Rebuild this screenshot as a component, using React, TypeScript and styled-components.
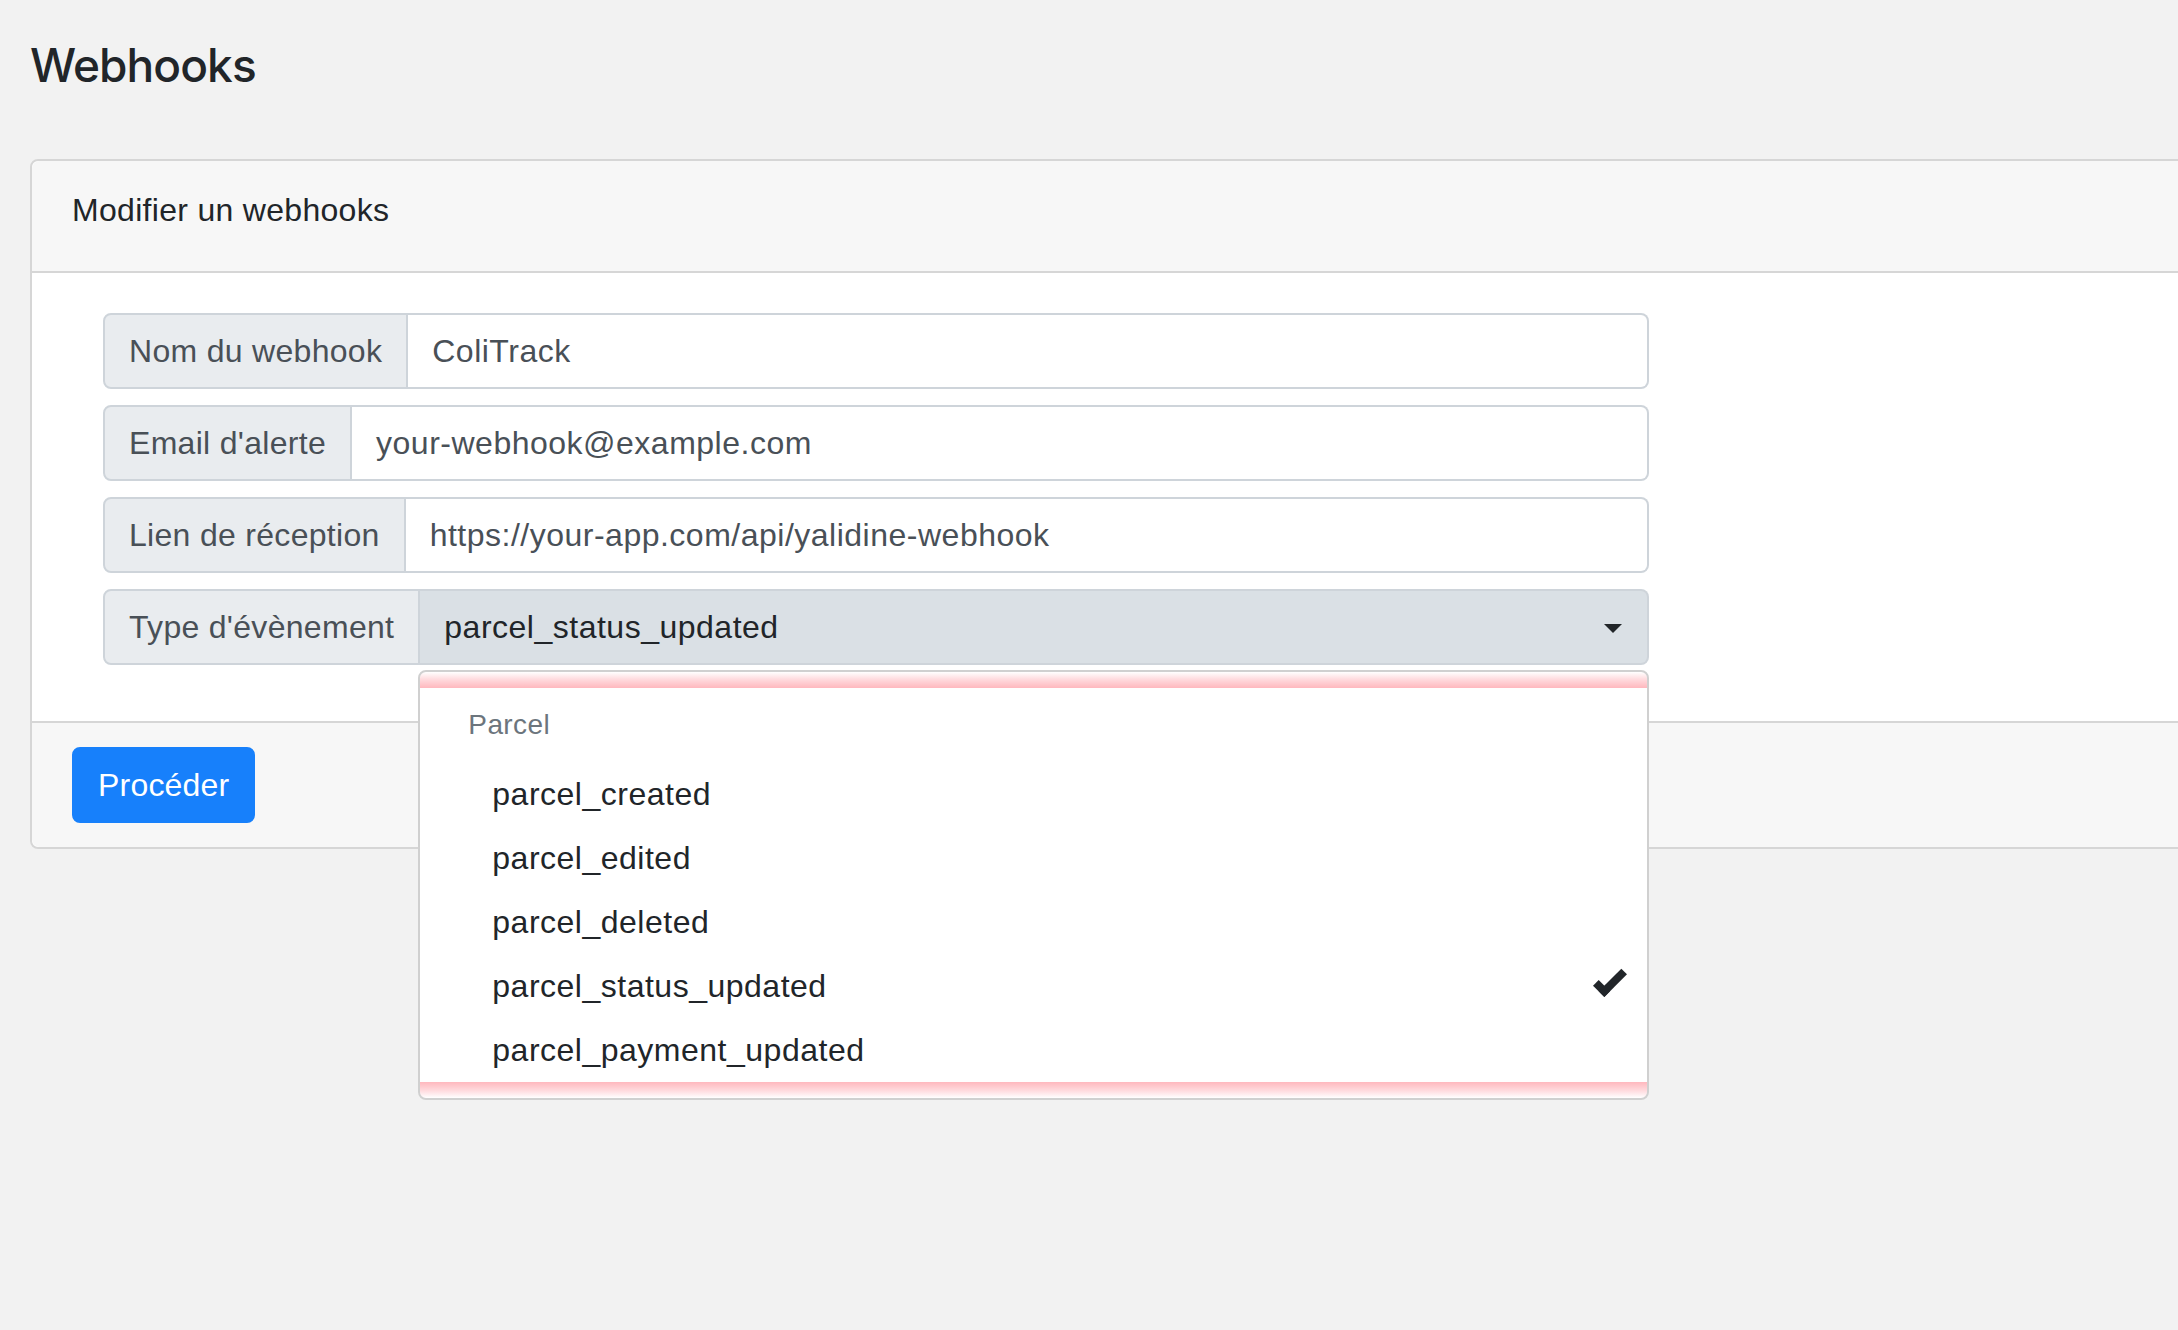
import React from 'react';
import styled, { createGlobalStyle } from 'styled-components';

const GlobalStyle = createGlobalStyle`
    html, body {
        margin: 0;
        padding: 0;
        background: #f2f2f2;
        overflow-x: hidden;
    }
    body {
        font-family: "Liberation Sans", Arial, sans-serif;
        color: #212529;
    }
`;

const Page = styled.div`
    padding: 37px 0 200px 30px;
    min-height: 1330px;
    box-sizing: border-box;
`;

const Title = styled.h4`
    margin: 0 0 65px;
    font-family: Inter, "Liberation Sans", sans-serif;
    font-size: 46px;
    line-height: 57px;
    font-weight: 500;
    letter-spacing: -0.9px;
    color: #212529;
`;

const Card = styled.div`
    width: calc(100% + 40px);
    background: #fff;
    border: 2px solid #d6d6d6;
    border-radius: 8px;
`;

const CardHeader = styled.div`
    padding: 25px 40px 37px;
    background: #f7f7f7;
    border-bottom: 2px solid #d6d6d6;
    border-radius: 8px 8px 0 0;
    font-size: 32px;
    line-height: 48px;
    letter-spacing: 0.3px;
`;

const CardBody = styled.div`
    padding: 40px 40px 40px 71px;
`;

const FormGrid = styled.div`
    width: 1546px;
    display: flex;
    flex-direction: column;
    gap: 16px;
    padding-bottom: 16px;
`;

const InputGroup = styled.div`
    display: flex;
    height: 76px;
    font-size: 32px;
    line-height: 48px;
    letter-spacing: 0.5px;
`;

const Addon = styled.div`
    display: flex;
    align-items: center;
    padding: 12px 24px;
    background: #e9ecef;
    color: #495057;
    border: 2px solid #ced4da;
    border-radius: 8px 0 0 8px;
    white-space: nowrap;
    letter-spacing: 0.3px;
`;

const TextField = styled.div`
    flex: 1;
    display: flex;
    align-items: center;
    padding: 12px 24px;
    background: #fff;
    color: #495057;
    border: 2px solid #ced4da;
    border-left: 0;
    border-radius: 0 8px 8px 0;
`;

const SelectWrap = styled.div`
    flex: 1;
    position: relative;
    display: flex;
`;

const SelectButton = styled.div`
    flex: 1;
    display: flex;
    align-items: center;
    justify-content: space-between;
    padding: 12px 25px 12px 24px;
    background: #dae0e5;
    color: #212529;
    border: 2px solid #ced4da;
    border-left: 0;
    border-radius: 0 8px 8px 0;
`;

const Caret = styled.span`
    width: 0;
    height: 0;
    margin-top: 2px;
    border-top: 9.6px solid #212529;
    border-left: 9.6px solid transparent;
    border-right: 9.6px solid transparent;
`;

const Menu = styled.div`
    position: absolute;
    top: calc(100% + 5px);
    left: -2px;
    right: 0;
    z-index: 10;
    background: #fff;
    border: 2px solid #d0d0d0;
    border-radius: 8px;
    overflow: hidden;
`;

const Fade = styled.div<{ $dir: 'down' | 'up' }>`
    height: 16px;
    background: linear-gradient(
        ${(p) => (p.$dir === 'down' ? 'to bottom' : 'to top')},
        rgba(255, 190, 196, 0) 0%,
        rgba(255, 190, 196, 0.55) 45%,
        rgba(255, 184, 190, 1) 100%
    );
`;

const MenuHeader = styled.div`
    padding: 16px 48px;
    font-size: 28px;
    line-height: 42px;
    letter-spacing: 0.4px;
    color: #6c757d;
`;

const MenuItem = styled.div`
    position: relative;
    padding: 8px 48px 8px 72px;
    font-size: 32px;
    line-height: 48px;
    letter-spacing: 0.5px;
    color: #212529;
`;

const CheckMark = styled.span`
    position: absolute;
    top: 10px;
    right: 29px;
    width: 16px;
    height: 32px;
    box-sizing: border-box;
    border-style: solid;
    border-color: #212529;
    border-width: 0 8px 8px 0;
    transform: rotate(45deg);
`;

const CardFooter = styled.div`
    padding: 24px 40px;
    background: #f7f7f7;
    border-top: 2px solid #d6d6d6;
    border-radius: 0 0 8px 8px;
`;

const PrimaryButton = styled.button`
    padding: 12px 24px;
    border: 2px solid #1780fb;
    border-radius: 8px;
    background: #1780fb;
    color: #fff;
    font-family: inherit;
    font-size: 32px;
    line-height: 48px;
    letter-spacing: 0.2px;
    cursor: pointer;
`;

const fields = [
    { label: 'Nom du webhook', value: 'ColiTrack' },
    { label: "Email d'alerte", value: 'your-webhook@example.com' },
    { label: 'Lien de réception', value: 'https://your-app.com/api/yalidine-webhook' },
];

const events = ['parcel_created', 'parcel_edited', 'parcel_deleted', 'parcel_status_updated', 'parcel_payment_updated'];

export default function App() {
    const selected = 'parcel_status_updated';

    return (
        <Page>
            <GlobalStyle />
            <Title>Webhooks</Title>
            <Card>
                <CardHeader>Modifier un webhooks</CardHeader>
                <CardBody>
                    <FormGrid>
                        {fields.map((f) => (
                            <InputGroup key={f.label}>
                                <Addon>{f.label}</Addon>
                                <TextField>{f.value}</TextField>
                            </InputGroup>
                        ))}
                        <InputGroup>
                            <Addon>Type d'évènement</Addon>
                            <SelectWrap>
                                <SelectButton>
                                    <span>{selected}</span>
                                    <Caret />
                                </SelectButton>
                                <Menu>
                                    <Fade $dir="down" />
                                    <MenuHeader>Parcel</MenuHeader>
                                    {events.map((e) => (
                                        <MenuItem key={e}>
                                            {e}
                                            {e === selected && <CheckMark />}
                                        </MenuItem>
                                    ))}
                                    <Fade $dir="up" />
                                </Menu>
                            </SelectWrap>
                        </InputGroup>
                    </FormGrid>
                </CardBody>
                <CardFooter>
                    <PrimaryButton>Procéder</PrimaryButton>
                </CardFooter>
            </Card>
        </Page>
    );
}
